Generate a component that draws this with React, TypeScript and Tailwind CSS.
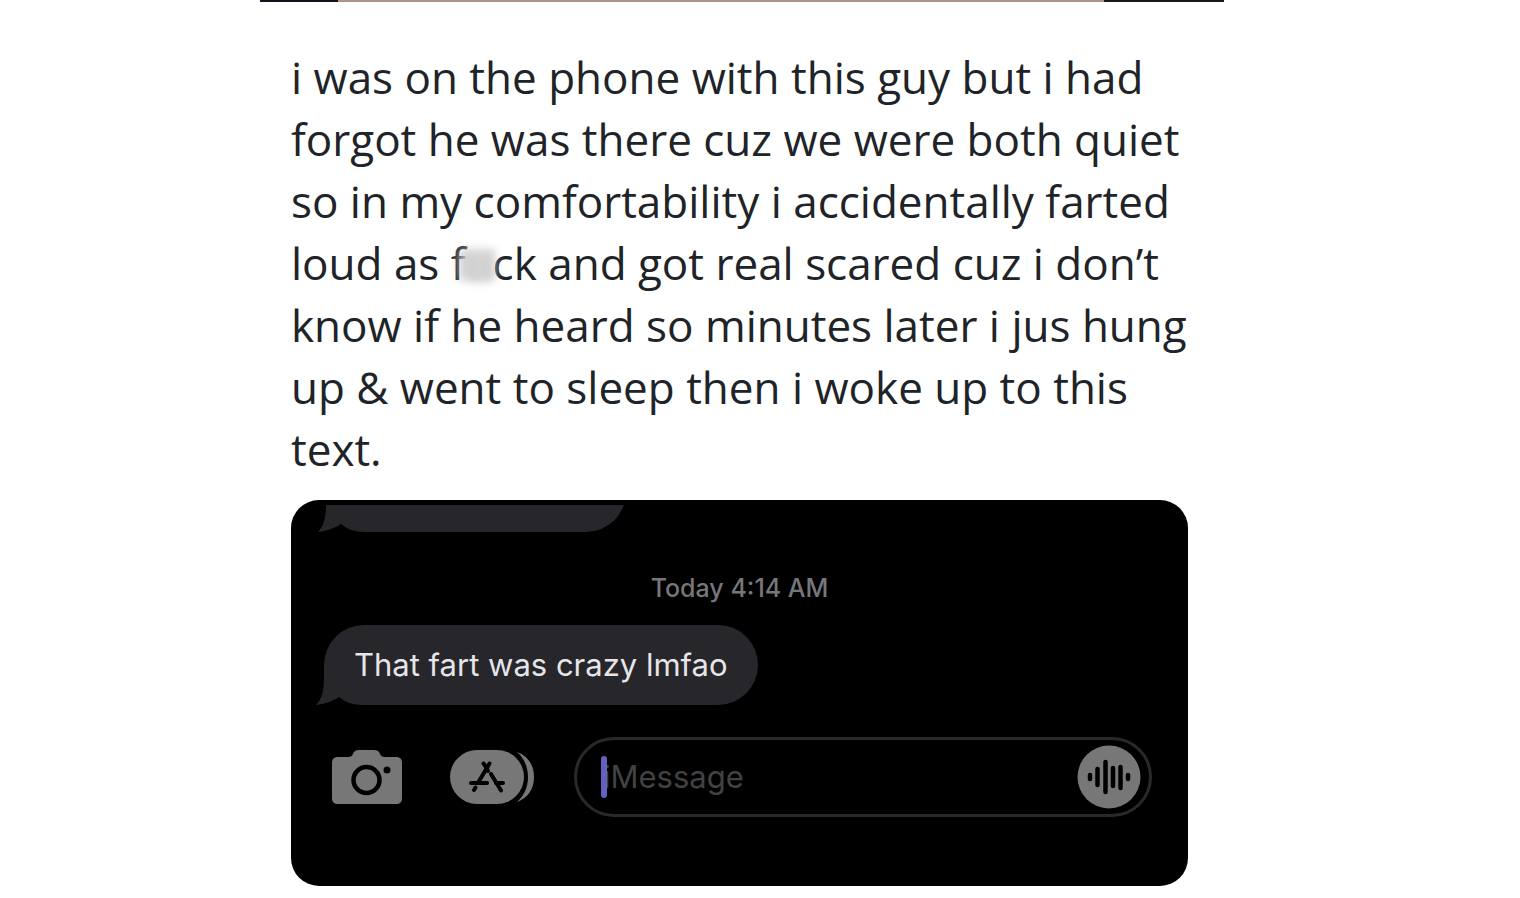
import { useState, type ReactNode } from 'react';

const postLines: ReactNode[] = [
  'i was on the phone with this guy but i had',
  'forgot he was there cuz we were both quiet',
  'so in my comfortability i accidentally farted',
  <>
    loud as <CensoredWord /> and got real scared cuz i don’t
  </>,
  'know if he heard so minutes later i jus hung',
  'up & went to sleep then i woke up to this',
  'text.',
];

function CensoredWord() {
  return (
    <span className="relative">
      f<span className="text-[#c4c4c4] blur-[4px]">u</span>ck
      <span className="absolute top-4 left-2 h-8 w-9 bg-[#cdcdcd]/85 blur-[4px]" />
    </span>
  );
}

function BubbleTail() {
  return (
    <svg className="absolute bottom-0 -left-2 h-10 w-12" viewBox="0 0 48 40" aria-hidden="true">
      <path d="M8 0 V12 C8 25 6 34 0 40 C9 39 17 36 23 32 C29 37 36 40 48 40 V0 Z" fill="#27262b" />
    </svg>
  );
}

function CameraIcon() {
  return (
    <svg className="h-[54px] w-[70px]" viewBox="0 0 70 54" aria-hidden="true">
      <path
        d="M6 7 H16 C19 7 20 6 21 4 C22 1 24 0 27 0 H42 C45 0 47 1 48 4 C49 6 50 7 53 7 H64 C68 7 70 9 70 13 V48 C70 52 68 54 64 54 H6 C2 54 0 52 0 48 V13 C0 9 2 7 6 7 Z"
        fill="#777777"
      />
      <circle cx="34.5" cy="30" r="13" fill="none" stroke="#000" strokeWidth="4.5" />
      <circle cx="55" cy="20" r="3.5" fill="#000" />
    </svg>
  );
}

function AppsIcon() {
  return (
    <svg className="h-[54px] w-[84px]" viewBox="0 0 84 54" aria-hidden="true">
      <rect width="74" height="54" rx="27" fill="#777777" />
      <path d="M67 2 C78 6 84 15 84 27 C84 39 78 48 67 52 C74 46 78 37 78 27 C78 17 74 8 67 2 Z" fill="#777777" />
      <g stroke="#000" strokeWidth="4" strokeLinecap="round">
        <path d="M33.5 13.5 L36 17" />
        <path d="M39.5 13.5 L28.5 32" />
        <path d="M36.5 18 L38 21" />
        <path d="M41 24 L51 40.5" />
        <path d="M21 33 H37" />
        <path d="M46 33 H53" />
        <path d="M25.5 37.5 L24 40" />
      </g>
    </svg>
  );
}

function VoiceIcon() {
  return (
    <svg className="h-16 w-16" viewBox="0 0 64 64" aria-hidden="true">
      <circle cx="32" cy="32" r="31.5" fill="#777777" />
      <g stroke="#000" strokeWidth="4.5" strokeLinecap="round">
        <path d="M13 30 V34" />
        <path d="M20.5 24 V40" />
        <path d="M28.5 17 V47" />
        <path d="M36 23 V41" />
        <path d="M43.5 22 V43" />
        <path d="M51 30 V34" />
      </g>
    </svg>
  );
}

export default function App() {
  const [message, setMessage] = useState('');

  return (
    <main className="min-h-screen overflow-hidden bg-white pr-[296px] pl-[260px]">
      {/* bottom edge of the picture above */}
      <div className="flex h-0.5">
        <div className="w-[78px] bg-[#11121c]" />
        <div className="flex-1 bg-[#ad938b]" />
        <div className="w-[120px] bg-[#15191b]" />
      </div>

      <article className="pt-11 pr-9 pl-[31px]">
        <p className="font-['Open_Sans',sans-serif] text-[44px] leading-[62px] whitespace-nowrap text-[#202327]">
          {postLines.map((line, index) => (
            <span key={index} className="block">
              {line}
            </span>
          ))}
        </p>

        <section className="mt-5 overflow-hidden rounded-[28px] bg-black pt-[5px] pb-[69px] font-['Inter',sans-serif]">
          {/* end of the previous message */}
          <div className="flex h-[27px] items-end overflow-hidden pl-[35px]">
            <div className="relative h-20 w-[300px] shrink-0 rounded-[40px] bg-[#27262b]">
              <BubbleTail />
            </div>
          </div>

          <time className="mt-10 block text-center text-[25px] leading-8 font-medium text-[#77777b]">
            Today 4:14 AM
          </time>

          <div className="relative mt-[21px] ml-[33px] flex h-20 w-fit items-center rounded-[40px] bg-[#27262b] px-[30px] text-[31px] text-[#e6e5ea]">
            <BubbleTail />
            <span className="z-10">That fart was crazy lmfao</span>
          </div>

          <form className="mt-8 flex items-center pr-9 pl-[41px]" onSubmit={e => e.preventDefault()}>
            <button type="button" aria-label="Camera" className="shrink-0">
              <CameraIcon />
            </button>
            <button type="button" aria-label="Apps" className="ml-12 shrink-0">
              <AppsIcon />
            </button>
            <div className="relative ml-10 flex h-20 min-w-0 flex-1 items-center rounded-full border-[3px] border-[#29292b] pr-2 pl-[26px]">
              <span className="absolute left-6 h-[42px] w-1.5 rounded-full bg-[#6261bd]" />
              <input
                type="text"
                aria-label="iMessage"
                placeholder="iMessage"
                value={message}
                onChange={e => setMessage(e.target.value)}
                className="min-w-0 flex-1 bg-transparent text-[31px] text-[#e6e5ea] outline-none placeholder:text-[#424245]"
              />
              <button type="button" aria-label="Record audio" className="shrink-0">
                <VoiceIcon />
              </button>
            </div>
          </form>
        </section>
      </article>
    </main>
  );
}
